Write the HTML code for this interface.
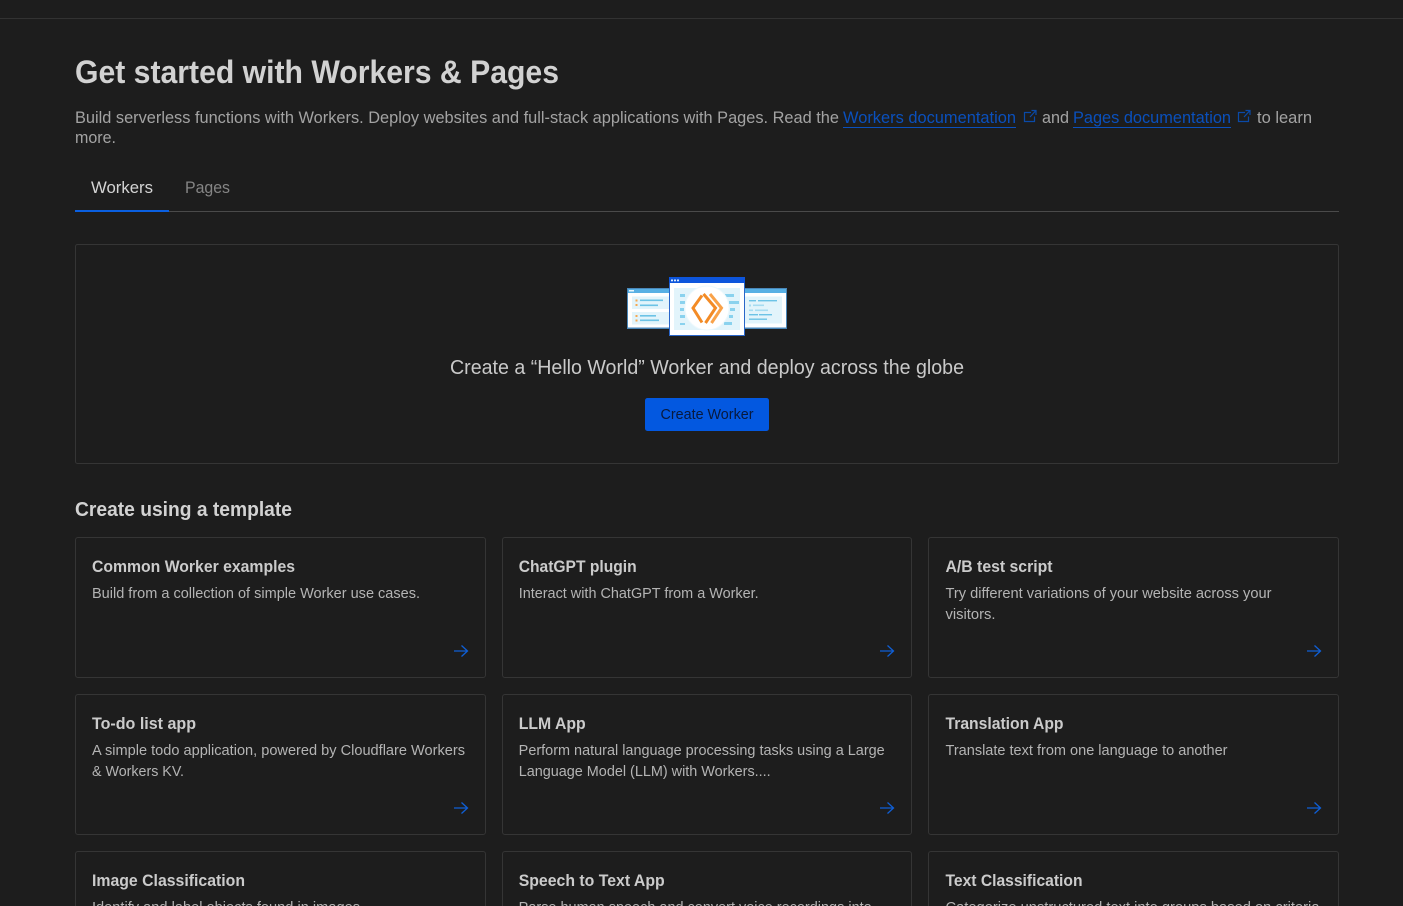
<!DOCTYPE html>
<html lang="en">
<head>
<meta charset="utf-8">
<title>Get started with Workers &amp; Pages</title>
<style>
html,body{margin:0;padding:0;background:#1d1d1d;width:1403px;height:906px;overflow:hidden}
svg{display:block;position:absolute;left:0;top:0}
text{font-family:"Liberation Sans",sans-serif;white-space:pre}
.h{font-weight:700;fill:#d2d2d2}
.p{font-size:16.4px;fill:#a3a3a3}
.l{font-size:16.4px;fill:#0a50bd}
.t{font-size:16.3px;font-weight:700;fill:#cbcbcb}
.d{font-size:14.4px;fill:#b4b4b4}
.c{fill:#1d1d1d;stroke:#353535;stroke-width:1}
.a{fill:none;stroke:#0f5fd6;stroke-width:1.3}
.e{fill:none;stroke:#0a4aa8;stroke-width:1.2}
</style>
</head>
<body>
<svg width="1403" height="906" viewBox="0 0 1403 906" xmlns="http://www.w3.org/2000/svg">
<defs><filter id="soft" x="-5%" y="-5%" width="110%" height="110%"><feGaussianBlur stdDeviation="0.35"/></filter></defs>
<rect width="1403" height="906" fill="#1d1d1d"/>
<rect x="0" y="18" width="1403" height="1" fill="#323232"/>

<text class="h" x="75" y="83" font-size="32.5" textLength="484" lengthAdjust="spacingAndGlyphs">Get started with Workers &amp; Pages</text>

<text class="p" x="75" y="123" textLength="764" lengthAdjust="spacingAndGlyphs">Build serverless functions with Workers. Deploy websites and full-stack applications with Pages. Read the</text>
<text class="l" x="843" y="123" textLength="173" lengthAdjust="spacingAndGlyphs">Workers documentation</text>
<rect x="843" y="127" width="173" height="1" fill="#0a50bd"/>
<path class="e" d="M1031 112.500h-6.500v9h10v-5M1030 117l5.500-6M1031.500 110.500h4.500v4.500"/>
<text class="p" x="1042" y="123" textLength="27" lengthAdjust="spacingAndGlyphs">and</text>
<text class="l" x="1073" y="123" textLength="158" lengthAdjust="spacingAndGlyphs">Pages documentation</text>
<rect x="1073" y="127" width="158" height="1" fill="#0a50bd"/>
<path class="e" d="M1245 112.500h-6.500v9h10v-5M1244 117l5.500-6M1245.500 110.500h4.500v4.500"/>
<text class="p" x="1257" y="123" textLength="55" lengthAdjust="spacingAndGlyphs">to learn</text>
<text class="p" x="75" y="143" textLength="41" lengthAdjust="spacingAndGlyphs">more.</text>

<text x="91" y="193" font-size="16.4" fill="#d4d4d4" textLength="62" lengthAdjust="spacingAndGlyphs">Workers</text>
<text x="185" y="193" font-size="16.4" fill="#858585" textLength="45" lengthAdjust="spacingAndGlyphs">Pages</text>
<rect x="75" y="211" width="1264" height="1" fill="#4a4a4a"/>
<rect x="75" y="210" width="94" height="2" fill="#0a5fe0"/>

<rect class="c" x="75.500" y="244.500" width="1263" height="219" rx="2"/>

<!-- illustration -->
<g filter="url(#soft)">
  <rect x="627" y="288" width="43" height="41" fill="#4a86b8"/>
  <rect x="628" y="289" width="42" height="4" fill="#58b0e4"/>
  <rect x="628" y="293" width="42" height="34.500" fill="#fff"/>
  <rect x="632" y="296.500" width="38" height="12.500" fill="#e2f4fb"/>
  <rect x="632" y="312" width="38" height="12.500" fill="#e2f4fb"/>
  <rect x="640" y="299.500" width="23" height="1.600" fill="#6cc3e6"/>
  <rect x="640" y="304.500" width="18" height="1.600" fill="#6cc3e6"/>
  <rect x="640" y="315" width="16" height="1.600" fill="#6cc3e6"/>
  <rect x="640" y="319.500" width="19" height="1.600" fill="#6cc3e6"/>
  <rect x="635.500" y="299.500" width="2" height="2" fill="#f6a650"/>
  <rect x="635.500" y="304" width="2" height="2" fill="#f6a650"/>
  <rect x="635.500" y="315" width="2" height="2" fill="#f6a650"/>
  <rect x="635.500" y="319.500" width="2" height="2" fill="#f6a650"/>
  <rect x="629" y="290" width="5" height="1.500" fill="#e8f6fc"/>

  <rect x="744" y="288" width="43" height="41" fill="#4a86b8"/>
  <rect x="744" y="289" width="42" height="4" fill="#58b0e4"/>
  <rect x="744" y="293" width="42" height="34.500" fill="#fff"/>
  <rect x="745" y="296.500" width="37" height="27" fill="#e2f4fb"/>
  <rect x="749" y="300" width="7" height="1.400" fill="#6cc3e6"/>
  <rect x="758" y="300" width="19" height="1.400" fill="#6cc3e6"/>
  <rect x="749" y="304.500" width="2" height="2" fill="#a6dcf1"/>
  <rect x="753" y="304.500" width="11" height="1.600" fill="#a6dcf1"/>
  <rect x="749" y="309.500" width="4" height="1.600" fill="#a6dcf1"/>
  <rect x="755" y="309.500" width="13" height="1.600" fill="#a6dcf1"/>
  <rect x="749" y="314" width="9" height="1.400" fill="#6cc3e6"/>
  <rect x="759" y="314" width="13" height="1.400" fill="#6cc3e6"/>
  <rect x="749" y="318.500" width="18" height="1.400" fill="#6cc3e6"/>

  <rect x="669" y="277" width="76" height="59" fill="#2a66c9"/>
  <rect x="669" y="277" width="76" height="6" fill="#0755dc"/>
  <rect x="670" y="283" width="74" height="52" fill="#fff"/>
  <rect x="674" y="288" width="66" height="42" fill="#e2f4fb"/>
  <rect x="671" y="279.500" width="2" height="1.800" fill="#dcecff"/>
  <rect x="674" y="279.500" width="2" height="1.800" fill="#dcecff"/>
  <rect x="677" y="279.500" width="2" height="1.800" fill="#dcecff"/>
  <g fill="#8ad2ee">
    <rect x="680" y="294" width="5" height="3"/>
    <rect x="680" y="301" width="5" height="3"/>
    <rect x="680" y="308" width="4" height="3"/>
    <rect x="680" y="315" width="5" height="3"/>
    <rect x="680" y="323" width="5" height="2"/>
    <rect x="725" y="294" width="9" height="3"/>
    <rect x="729" y="301" width="10" height="3"/>
    <rect x="730" y="308" width="5" height="3"/>
    <rect x="729" y="315" width="4" height="3"/>
    <rect x="724" y="322" width="8" height="3"/>
  </g>
  <circle cx="707" cy="308" r="22" fill="#fff"/>
  <circle cx="707" cy="308" r="22" fill="none" stroke="#eef9fd" stroke-width="1"/>
  <g fill="none" stroke-width="3">
    <path d="M702 295.500l-9 12.500 9 14.500" stroke="#f38b26"/>
    <path d="M703.500 294l12 14-10 15" stroke="#f38b26"/>
    <path d="M710 294l11.500 14-10 15" stroke="#f9a24a"/>
  </g>
</g>

<text x="450" y="374" font-size="20.400" fill="#c9c9c9" textLength="514" lengthAdjust="spacingAndGlyphs">Create a “Hello World” Worker and deploy across the globe</text>

<rect x="645" y="398" width="124" height="33" rx="2.500" fill="#0358e0"/>
<text x="660.500" y="419" font-size="14.400" fill="#08193d" textLength="93" lengthAdjust="spacingAndGlyphs">Create Worker</text>

<text class="h" x="75" y="516" font-size="20.400" textLength="217" lengthAdjust="spacingAndGlyphs">Create using a template</text>

<!-- row 1 -->
<rect class="c" x="75.500" y="537.500" width="410" height="140" rx="2.500"/>
<rect class="c" x="502.500" y="537.500" width="409" height="140" rx="2.500"/>
<rect class="c" x="928.500" y="537.500" width="410" height="140" rx="2.500"/>
<text class="t" x="92" y="572" textLength="203" lengthAdjust="spacingAndGlyphs">Common Worker examples</text>
<text class="d" x="92" y="598" textLength="328" lengthAdjust="spacingAndGlyphs">Build from a collection of simple Worker use cases.</text>
<text class="t" x="518.700" y="572" textLength="118" lengthAdjust="spacingAndGlyphs">ChatGPT plugin</text>
<text class="d" x="518.700" y="598" textLength="240" lengthAdjust="spacingAndGlyphs">Interact with ChatGPT from a Worker.</text>
<text class="t" x="945.500" y="572" textLength="107" lengthAdjust="spacingAndGlyphs">A/B test script</text>
<text class="d" x="945.500" y="598" textLength="326" lengthAdjust="spacingAndGlyphs">Try different variations of your website across your</text>
<text class="d" x="945.500" y="619" textLength="50" lengthAdjust="spacingAndGlyphs">visitors.</text>
<path class="a" d="M454 651h13.500M461.500 645.500l6 5.500-6 5.500"/>
<path class="a" d="M880 651h13.500M887.500 645.500l6 5.500-6 5.500"/>
<path class="a" d="M1307 651h13.500M1314.500 645.500l6 5.500-6 5.500"/>

<!-- row 2 -->
<rect class="c" x="75.500" y="694.500" width="410" height="140" rx="2.500"/>
<rect class="c" x="502.500" y="694.500" width="409" height="140" rx="2.500"/>
<rect class="c" x="928.500" y="694.500" width="410" height="140" rx="2.500"/>
<text class="t" x="92" y="729" textLength="104" lengthAdjust="spacingAndGlyphs">To-do list app</text>
<text class="d" x="92" y="755" textLength="373" lengthAdjust="spacingAndGlyphs">A simple todo application, powered by Cloudflare Workers</text>
<text class="d" x="92" y="776" textLength="92" lengthAdjust="spacingAndGlyphs">&amp; Workers KV.</text>
<text class="t" x="518.700" y="729" textLength="67" lengthAdjust="spacingAndGlyphs">LLM App</text>
<text class="d" x="518.700" y="755" textLength="366" lengthAdjust="spacingAndGlyphs">Perform natural language processing tasks using a Large</text>
<text class="d" x="518.700" y="776" textLength="252" lengthAdjust="spacingAndGlyphs">Language Model (LLM) with Workers....</text>
<text class="t" x="945.500" y="729" textLength="118" lengthAdjust="spacingAndGlyphs">Translation App</text>
<text class="d" x="945.500" y="755" textLength="282" lengthAdjust="spacingAndGlyphs">Translate text from one language to another</text>
<path class="a" d="M454 808h13.500M461.500 802.500l6 5.500-6 5.500"/>
<path class="a" d="M880 808h13.500M887.500 802.500l6 5.500-6 5.500"/>
<path class="a" d="M1307 808h13.500M1314.500 802.500l6 5.500-6 5.500"/>

<!-- row 3 -->
<rect class="c" x="75.500" y="851.500" width="410" height="140" rx="2.500"/>
<rect class="c" x="502.500" y="851.500" width="409" height="140" rx="2.500"/>
<rect class="c" x="928.500" y="851.500" width="410" height="140" rx="2.500"/>
<text class="t" x="92" y="886" textLength="153" lengthAdjust="spacingAndGlyphs">Image Classification</text>
<text class="d" x="92" y="912" textLength="268" lengthAdjust="spacingAndGlyphs">Identify and label objects found in images</text>
<text class="t" x="518.700" y="886" textLength="146" lengthAdjust="spacingAndGlyphs">Speech to Text App</text>
<text class="d" x="518.700" y="912" textLength="353" lengthAdjust="spacingAndGlyphs">Parse human speech and convert voice recordings into</text>
<text class="t" x="945.500" y="886" textLength="137" lengthAdjust="spacingAndGlyphs">Text Classification</text>
<text class="d" x="945.500" y="912" textLength="374" lengthAdjust="spacingAndGlyphs">Categorize unstructured text into groups based on criteria</text>
</svg>
</body>
</html>
